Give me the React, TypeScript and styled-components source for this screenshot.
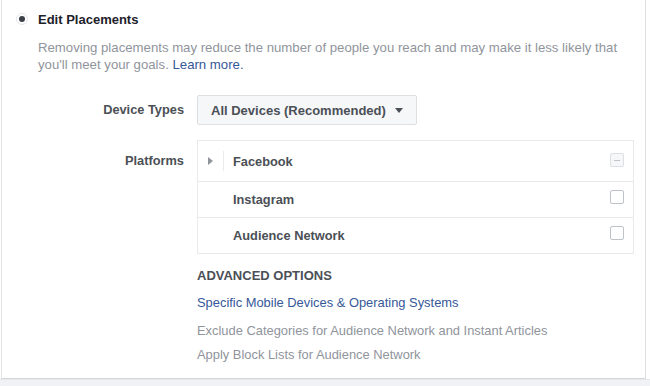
import React from "react";
import styled, { createGlobalStyle } from "styled-components";

const GlobalStyle = createGlobalStyle`
  html, body {
    margin: 0;
    padding: 0;
    background: #ffffff;
  }
  body {
    font-family: "Liberation Sans", Arial, sans-serif;
    -webkit-font-smoothing: antialiased;
  }
`;

const platforms = [
  { name: "Facebook", expandable: true, state: "mixed" },
  { name: "Instagram", expandable: false, state: "off" },
  { name: "Audience Network", expandable: false, state: "off" },
];

export default function App() {
  return (
    <>
      <GlobalStyle />
      <Page>
        <Panel>
          <Header>
            <Radio />
            <Title>Edit Placements</Title>
          </Header>
          <Description>
            Removing placements may reduce the number of people you reach and may make it less likely that
            <br />
            you'll meet your goals. <Link>Learn more.</Link>
          </Description>

          <FormRow $top={22}>
            <Label>Device Types</Label>
            <Dropdown>
              All Devices (Recommended)
              <Caret />
            </Dropdown>
          </FormRow>

          <FormRow $top={15}>
            <Label $offset={6}>Platforms</Label>
            <Table>
              {platforms.map((p, i) => (
                <PlatformRow key={p.name} $first={i === 0}>
                  <Expander>{p.expandable && <Triangle />}</Expander>
                  {p.expandable && <Divider />}
                  <PlatformName>{p.name}</PlatformName>
                  <Checkbox $mixed={p.state === "mixed"} $first={i === 0}>
                    {p.state === "mixed" && <Dash />}
                  </Checkbox>
                </PlatformRow>
              ))}
            </Table>
          </FormRow>

          <Advanced>
            <AdvancedTitle>ADVANCED OPTIONS</AdvancedTitle>
            <AdvancedLink>Specific Mobile Devices &amp; Operating Systems</AdvancedLink>
            <AdvancedMuted $top={12}>Exclude Categories for Audience Network and Instant Articles</AdvancedMuted>
            <AdvancedMuted $top={8}>Apply Block Lists for Audience Network</AdvancedMuted>
          </Advanced>
        </Panel>
        <Shelf />
      </Page>
    </>
  );
}

const Page = styled.div`
  width: 650px;
  height: 386px;
  overflow: hidden;
  background: #ffffff;
`;

const Panel = styled.div`
  width: 645px;
  height: 379px;
  box-sizing: border-box;
  margin-left: 1px;
  border-left: 1px solid #e3e4e8;
  border-right: 1px solid #dddfe2;
  border-bottom: 1px solid #d3d6db;
  background: #ffffff;
  padding-top: 11px;
`;

const Shelf = styled.div`
  height: 7px;
  background: #f1f2f5;
  border-top: 1px solid #e6e8ec;
`;

const Header = styled.div`
  display: flex;
  align-items: center;
  padding-left: 14px;
  height: 16px;
`;

const Radio = styled.span`
  width: 12px;
  height: 12px;
  box-sizing: border-box;
  border-radius: 50%;
  border: 1px solid #e4e6ea;
  background: #ffffff;
  display: flex;
  align-items: center;
  justify-content: center;

  &::after {
    content: "";
    width: 6px;
    height: 6px;
    border-radius: 50%;
    background: #3b3f46;
  }
`;

const Title = styled.span`
  margin-left: 10px;
  font-size: 13px;
  font-weight: bold;
  color: #1d2129;
`;

const Description = styled.p`
  margin: 12px 0 0 36px;
  font-size: 13.2px;
  line-height: 17px;
  color: #90949c;
  white-space: nowrap;
`;

const Link = styled.span`
  color: #365899;
`;

const FormRow = styled.div<{ $top?: number }>`
  display: grid;
  grid-template-columns: 182px auto;
  column-gap: 13px;
  align-items: start;
  margin-top: ${(p) => p.$top ?? 16}px;
`;

const Label = styled.div<{ $offset?: number }>`
  text-align: right;
  font-size: 12.8px;
  font-weight: bold;
  color: #4b4f56;
  line-height: 29px;
  margin-top: ${(p) => p.$offset ?? 0}px;
`;

const Dropdown = styled.div`
  justify-self: start;
  display: flex;
  align-items: center;
  height: 30px;
  box-sizing: border-box;
  padding: 0 13px 0 13px;
  border: 1px solid #dddfe2;
  border-radius: 2px;
  background: #f6f7f9;
  font-size: 13px;
  font-weight: bold;
  color: #4b4f56;
`;

const Caret = styled.span`
  margin-left: 9px;
  width: 0;
  height: 0;
  border-left: 4px solid transparent;
  border-right: 4px solid transparent;
  border-top: 5px solid #4b4f56;
`;

const Table = styled.div`
  width: 437px;
  box-sizing: border-box;
  border: 1px solid #e9eaed;
`;

const PlatformRow = styled.div<{ $first?: boolean }>`
  display: flex;
  align-items: center;
  height: ${(p) => (p.$first ? 40 : 35)}px;
  border-top: ${(p) => (p.$first ? "none" : "1px solid #e9eaed")};
  padding-left: 8px;
  padding-right: 9px;
  position: relative;
`;

const Expander = styled.span`
  width: 15px;
  display: flex;
  align-items: center;
`;

const Triangle = styled.span`
  width: 0;
  height: 0;
  margin-left: 2px;
  border-top: 4px solid transparent;
  border-bottom: 4px solid transparent;
  border-left: 5px solid #90949c;
`;

const Divider = styled.span`
  position: absolute;
  left: 25px;
  top: 10px;
  width: 1px;
  height: 20px;
  background: #e9eaed;
`;

const PlatformName = styled.span`
  margin-left: 12px;
  flex: 1;
  font-size: 12.8px;
  font-weight: bold;
  color: #4b4f56;
`;

const Checkbox = styled.span<{ $mixed?: boolean; $first?: boolean }>`
  width: 14px;
  height: 14px;
  box-sizing: border-box;
  border: 1px solid ${(p) => (p.$mixed ? "#dddfe2" : "#bec2c9")};
  border-radius: 2px;
  background: ${(p) => (p.$mixed ? "#f6f7f9" : "#ffffff")};
  display: flex;
  align-items: center;
  justify-content: center;
  align-self: ${(p) => (p.$first ? "flex-start" : "center")};
  margin-top: ${(p) => (p.$first ? 12 : -6)}px;
`;

const Dash = styled.span`
  width: 6px;
  height: 1px;
  background: #bec2c9;
`;

const Advanced = styled.div`
  margin-left: 195px;
  margin-top: 14px;
  display: flex;
  flex-direction: column;
`;

const AdvancedTitle = styled.div`
  font-size: 13px;
  font-weight: bold;
  color: #4b4f56;
  line-height: 16px;
`;

const AdvancedLink = styled.div`
  margin-top: 11px;
  font-size: 12.9px;
  line-height: 16px;
  color: #365899;
`;

const AdvancedMuted = styled.div<{ $top: number }>`
  margin-top: ${(p) => p.$top}px;
  font-size: 12.9px;
  line-height: 16px;
  color: #90949c;
`;
